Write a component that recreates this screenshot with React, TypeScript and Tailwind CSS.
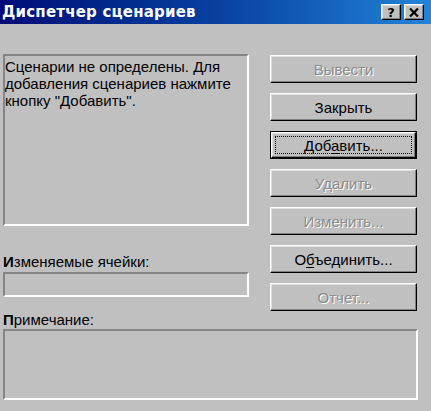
import React from "react";

const raised =
  "border border-t-white border-l-white border-r-black border-b-black shadow-[inset_-1px_-1px_0_#808080,inset_1px_1px_0_#dfdfdf]";
const sunken =
  "border-2 border-t-[#858585] border-l-[#858585] border-r-white border-b-white";

function Btn({
  children,
  disabled,
}: {
  children: React.ReactNode;
  disabled?: boolean;
}) {
  return (
    <div
      className={`${raised} h-[28px] flex items-center justify-center ${
        disabled
          ? "text-[#8c8c8c] [text-shadow:1px_1px_0_#ffffff]"
          : "text-black"
      }`}
    >
      {children}
    </div>
  );
}

function DefaultBtn({ children }: { children: React.ReactNode }) {
  return (
    <div className="h-[28px] border border-black flex">
      <div className={`${raised} flex-1 flex p-[3px]`}>
        <div className="flex-1 border border-dotted border-black flex items-center justify-center text-black">
          {children}
        </div>
      </div>
    </div>
  );
}

export default function App() {
  return (
    <div className="w-[431px] h-[411px] bg-[#c0c0c0] overflow-hidden font-['Liberation_Sans',Arial,sans-serif] text-[15px] leading-[17px] text-black">
      {/* title bar */}
      <div className="h-[24px] bg-gradient-to-r from-[#000a78] via-[#0a3fa0] to-[#2484d8] flex items-center pl-[2px] pr-[7px]">
        <span className="text-white font-bold text-[15px] font-['DejaVu_Sans',sans-serif] tracking-[0.2px]">
          Диспетчер сценариев
        </span>
        <div className="ml-auto flex gap-[3px]">
          <div
            className={`${raised} bg-[#c0c0c0] w-[20px] h-[16px] flex items-center justify-center font-bold text-[13px] leading-none font-['DejaVu_Sans',sans-serif]`}
          >
            ?
          </div>
          <div
            className={`${raised} bg-[#c0c0c0] w-[20px] h-[16px] flex items-center justify-center`}
          >
            <svg width="10" height="9" viewBox="0 0 10 9">
              <path d="M1 0.5 L9 8.5 M9 0.5 L1 8.5" stroke="#000" strokeWidth="2.2" />
            </svg>
          </div>
        </div>
      </div>

      {/* main row */}
      <div className="flex pl-[3px] pt-[30px]">
        <div className="w-[246px] flex flex-col">
          <div className={`${sunken} h-[172px] pl-[0px] pt-[2px]`}>
            Сценарии не определены. Для добавления сценариев нажмите кнопку
            "Добавить".
          </div>
          <div className="mt-[27px] h-[17px]">
            <span className="font-bold">И</span>зменяемые ячейки:
          </div>
          <div className={`${sunken} mt-[2px] h-[25px]`} />
        </div>

        <div className="ml-[21px] w-[147px] flex flex-col gap-[10px] pt-[1px]">
          <Btn disabled>Вывести</Btn>
          <Btn>Закрыть</Btn>
          <DefaultBtn>
            <span>
              Доб<span className="underline underline-offset-2">а</span>вить...
            </span>
          </DefaultBtn>
          <Btn disabled>Удалить</Btn>
          <Btn disabled>Изменить...</Btn>
          <Btn>
            <span>
              О<span className="underline underline-offset-2">б</span>ъединить...
            </span>
          </Btn>
          <Btn disabled>Отчет...</Btn>
        </div>
      </div>

      <div className="pl-[3px] h-[17px]">
        <span className="font-bold">П</span>римечание:
      </div>
      <div className={`${sunken} ml-[3px] mt-[1px] w-[415px] h-[71px]`} />
    </div>
  );
}
